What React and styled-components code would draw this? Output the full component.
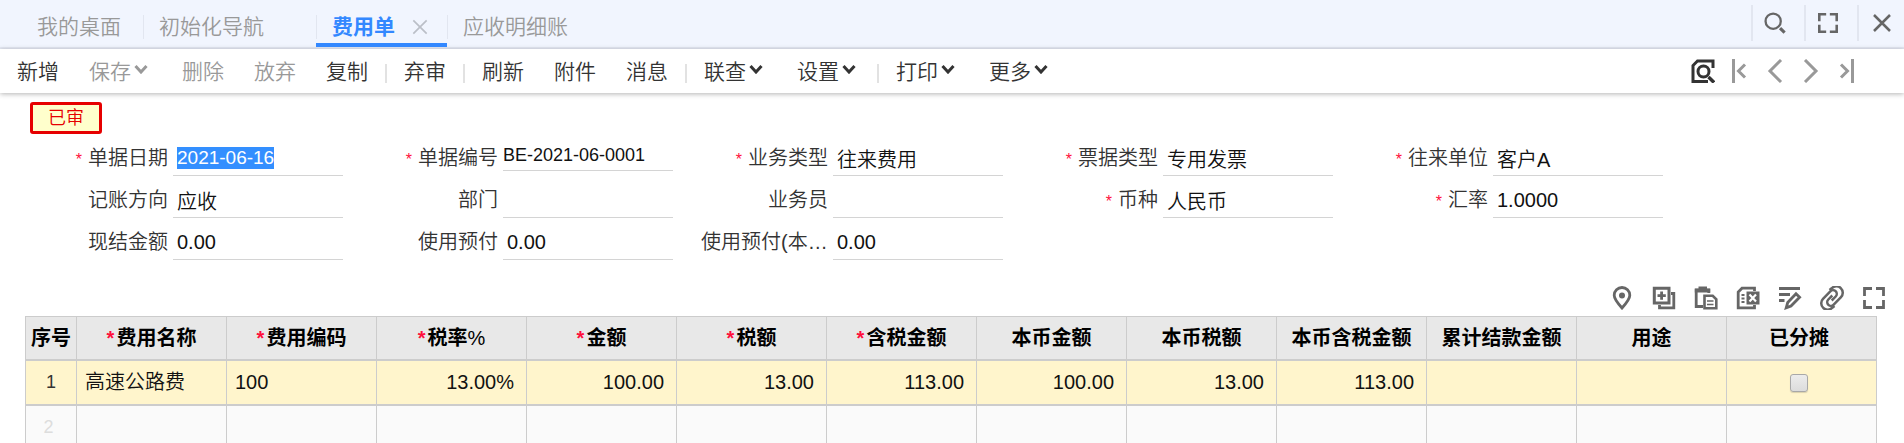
import React, { useEffect, useRef } from "react";
import styled, { createGlobalStyle } from "styled-components";

const GlobalStyle = createGlobalStyle`
  * {
    box-sizing: border-box;
  }
  body {
    margin: 0;
    background: #ffffff;
    font-family: "Liberation Sans", "Noto Sans CJK SC", sans-serif;
    font-weight: 350;
    color: #333333;
    overflow: hidden;
  }
  button, input {
    font-family: inherit;
    font-weight: inherit;
    border: 0;
    padding: 0;
    margin: 0;
    background: none;
  }
  button {
    cursor: pointer;
  }
`;

const Header = styled.header`
  display: flex;
  justify-content: space-between;
  background: #f1f5fe;
  border-bottom: 2px solid #e5e9f4;
`;

const Tabs = styled.nav`
  display: flex;
  padding-left: 22px;
`;

const Tab = styled.div`
  display: flex;
  align-items: center;
  height: 47px;
  padding-top: 11px;
  border-bottom: 4px solid ${(props) => (props.$active ? "#3388ff" : "transparent")};
`;

const Divider = styled.span`
  width: ${(props) => (props.$wide ? 2 : 1)}px;
  height: ${(props) => props.$height}px;
  background: #e2e6f0;
`;

const TabName = styled.button`
  padding: 0 15px;
  font-size: 21px;
  line-height: 24px;
  font-weight: ${(props) => (props.$active ? "bold" : "inherit")};
  color: ${(props) => (props.$active ? "#3388ff" : "#999999")};
`;

const CloseSlot = styled.span`
  display: flex;
  width: ${(props) => (props.$small ? 7 : 37)}px;
`;

const IconButton = styled.button`
  display: flex;
  align-items: center;
  justify-content: center;
  width: ${(props) => props.$width || 24}px;
  height: 24px;
  padding-right: ${(props) => (props.$inset ? 8 : 0)}px;
  color: ${(props) => props.$color || "#666666"};
`;

const WindowTools = styled.div`
  display: flex;
  align-items: center;
  height: 45px;
`;

const Toolbar = styled.div`
  display: flex;
  align-items: center;
  justify-content: space-between;
  height: 44px;
  padding: 0 45px 0 2px;
  background: #ffffff;
  box-shadow: 0 1px 5px rgba(0, 0, 0, 0.3);
`;

const ToolGroup = styled.div`
  display: flex;
  align-items: center;
  gap: ${(props) => props.$gap || 0}px;
`;

const ToolButton = styled.button`
  display: flex;
  align-items: center;
  padding: 2px 15px 0;
  font-size: 21px;
  line-height: 28px;
  color: ${(props) => (props.disabled ? "#999999" : "#333333")};
`;

const Arrow = styled.svg`
  width: 14px;
  height: 10px;
  margin: 0 4px 6px 3px;
`;

const ToolDivider = styled.span`
  width: 2px;
  height: 19px;
  margin: 4px 2px 0;
  background: #e2e2e2;
`;

const Stamp = styled.div`
  width: 72px;
  margin: 9px 0 0 30px;
  padding-top: 1px;
  border: 3px solid #e60000;
  border-radius: 3px;
  background: #ffffcc;
  color: #e60000;
  font-size: 18px;
  line-height: 25px;
  text-align: center;
`;

const Form = styled.form`
  display: grid;
  grid-template-columns: repeat(auto-fill, 302px);
  gap: 7px 28px;
  padding: 7px 0 0 41px;
`;

const Field = styled.div`
  display: flex;
  height: 35px;
`;

const Label = styled.label`
  width: 132px;
  padding-right: 5px;
  font-size: 20px;
  line-height: 34px;
  text-align: right;
  white-space: nowrap;
  overflow: hidden;
  text-overflow: ellipsis;
`;

const Star = styled.span`
  margin-right: ${(props) => (props.$head ? 2 : 6)}px;
  font-size: ${(props) => (props.$head ? 20 : 16)}px;
  color: #ff0f3c;
`;

const Value = styled.input`
  flex: 1;
  min-width: 0;
  height: ${(props) => (props.readOnly ? 30 : 35)}px;
  padding-left: ${(props) => (props.readOnly ? 0 : 4)}px;
  border-bottom: 1px solid #d4d4d4;
  font-size: ${(props) => props.$size || 20}px;
  line-height: 22px;
  color: #111111;
  outline: none;
  &::selection {
    background: #338fff;
    color: #ffffff;
  }
`;

const GridTools = styled.div`
  display: flex;
  justify-content: flex-end;
  gap: 18px;
  padding: 26px 18px 6px 0;
`;

const TableWrap = styled.div`
  padding: 0 27px 0 25px;
`;

const Table = styled.table`
  width: 100%;
  table-layout: fixed;
  border-collapse: separate;
  border-spacing: 0;
  border-top: 1px solid #cccccc;
  border-left: 1px solid #cccccc;
  font-size: 20px;
  line-height: 28px;
  color: #111111;
`;

const HeadCell = styled.th`
  width: ${(props) => (props.$narrow ? "51px" : "auto")};
  height: 44px;
  padding: 0 ${(props) => (props.$check ? 5 : 0)}px 0 0;
  border-right: 1px solid #cccccc;
  border-bottom: 2px solid #cccccc;
  background: #e8e8e8;
  color: #000000;
  white-space: nowrap;
`;

const Percent = styled.span`
  font-weight: normal;
`;

const Cell = styled.td`
  height: 45px;
  padding: 0 ${(props) => (props.$align === "right" ? 12 : 8)}px 2px;
  border-right: 1px solid #cccccc;
  border-bottom: 2px solid #cccccc;
  background: ${(props) => (props.$blank ? "#fafafa" : "#fff5cc")};
  text-align: ${(props) => props.$align || "left"};
`;

const RowNumber = styled(Cell)`
  font-size: 18px;
  color: ${(props) => (props.$blank ? "#dddddd" : "#333333")};
  padding: 0 ${(props) => (props.$blank ? 5 : 0)}px 2px 0;
`;

const CheckCell = styled(Cell)`
  padding: 0 5px 0 0;
`;

const Checkbox = styled.input`
  appearance: none;
  display: block;
  width: 18px;
  height: 18px;
  margin: 0 auto;
  border: 1px solid #a8a8a8;
  border-radius: 3px;
  background: linear-gradient(#ececec, #dcdcdc);
  box-shadow: 0 1px 1px rgba(0, 0, 0, 0.15);
`;

const Icon = ({ children, size = 24, stroke = 2.5 }) => (
  <svg
    width={size}
    height={size}
    viewBox="0 0 24 24"
    fill="none"
    stroke="currentColor"
    strokeWidth={stroke}
    aria-hidden="true"
  >
    {children}
  </svg>
);

const icons = {
  search: (
    <>
      <circle cx="10" cy="10" r="8.3" />
      <path d="M17.5 17.5l5 5" strokeWidth="3.4" />
    </>
  ),
  full: <path d="M10 2.5H2.5V10M14 2.5h7.5V10M21.5 14v7.5H14M10 21.5H2.5V14" strokeWidth="2.8" />,
  close: <path d="M4 4l16 16M20 4L4 20" />,
  preview: (
    <>
      <path d="M22 9V2H6.5L2 6.5V22.5H17" strokeWidth="3" />
      <circle cx="12.5" cy="12.5" r="5.5" strokeWidth="3" />
      <path d="M17.5 18l5.5 5.5" strokeWidth="3.4" />
    </>
  ),
  first: <path d="M6.5 0v24M18 5.5L11.5 12l6.5 6.5" strokeWidth="3" />,
  prev: <path d="M18 1L7 12l11 11" strokeWidth="3" />,
  next: <path d="M6 1l11 11L6 23" strokeWidth="3" />,
  last: <path d="M17.5 0v24M6 5.5l6.5 6.5L6 18.5" strokeWidth="3" />,
  pin: (
    <>
      <path d="M12 22C7 16.5 4.2 13 4.2 9.3a7.8 7.8 0 0 1 15.6 0C19.8 13 17 16.5 12 22z" strokeWidth="2.8" />
      <circle cx="12" cy="9.5" r="3" fill="currentColor" stroke="none" />
    </>
  ),
  addRow: (
    <>
      <path d="M2.3 2.3h14.7v14.7H2.3z" strokeWidth="3" />
      <path d="M5.5 9.6h8.3M9.6 5.5v8.3M19 7.5h2.8v14.3H7.5V19" strokeWidth="2.8" />
    </>
  ),
  paste: (
    <>
      <path d="M9 20.5H2.2V4.2h12.6V7" strokeWidth="2.8" />
      <path d="M4.5 0.5h8.5v4H4.5z" fill="currentColor" stroke="none" />
      <path d="M0.8 4.5h15.4" strokeWidth="4" />
      <path d="M10.5 9.8h8.2l3.6 3.6v8.8H10.5z" strokeWidth="2.6" />
      <path d="M13 15h6.5M13 18.5h6.5" strokeWidth="1.6" />
    </>
  ),
  excel: (
    <>
      <path d="M18.5 5V2.2H6L2.2 6v15.8h16.3V19" strokeWidth="2.8" />
      <path d="M10.5 5.5H23.5v13H10.5z" fill="currentColor" stroke="none" />
      <path d="M13.5 8.5l6.5 7M20 8.5l-6.5 7" stroke="#ffffff" strokeWidth="2.2" />
      <path d="M5.500 9h3M5.500 12.500h3M5.500 16h3" strokeWidth="2" />
    </>
  ),
  edit: (
    <>
      <path d="M1 2.5h21M1 8.5h11M1 14.5h5.5" strokeWidth="2.8" />
      <path d="M8.2 21.8l1.5-5.3L18 7.8l3.6 3.5-8.6 8.7z" strokeWidth="2.8" />
    </>
  ),
  link: (
    <>
      <path d="M9.5 4l2.2-1.7a6.2 6.2 0 0 1 9.3 8.8l-7.3 7.600a3.700 3.700 0 0 1-5.400-5.200l4-4" />
      <path d="M14.500 20l-2.200 1.700a6.200 6.200 0 0 1-9.300-8.800l7.300-7.600a3.700 3.700 0 0 1 5.400 5.200l-4 4" />
    </>
  ),
};

const NamedIcon = ({ name, label, width, size, stroke, color, inset }) => (
  <IconButton type="button" aria-label={label} $width={width} $color={color} $inset={inset}>
    <Icon size={size} stroke={stroke}>
      {icons[name]}
    </Icon>
  </IconButton>
);

const tools = [
  { name: "新增" },
  { name: "保存", disabled: true, menu: true },
  { name: "删除", disabled: true },
  { name: "放弃", disabled: true },
  { name: "复制" },
  { divider: true },
  { name: "弃审" },
  { divider: true },
  { name: "刷新" },
  { name: "附件" },
  { name: "消息" },
  { divider: true },
  { name: "联查", menu: true },
  { name: "设置", menu: true },
  { divider: true },
  { name: "打印", menu: true },
  { name: "更多", menu: true },
];

const fields = [
  { id: "date", label: "单据日期", value: "2021-06-16", required: true, size: 19 },
  { id: "code", label: "单据编号", value: "BE-2021-06-0001", required: true, readOnly: true, size: 18 },
  { id: "business", label: "业务类型", value: "往来费用", required: true },
  { id: "invoice", label: "票据类型", value: "专用发票", required: true },
  { id: "partner", label: "往来单位", value: "客户A", required: true },
  { id: "direction", label: "记账方向", value: "应收" },
  { id: "department", label: "部门", value: "" },
  { id: "clerk", label: "业务员", value: "" },
  { id: "currency", label: "币种", value: "人民币", required: true },
  { id: "rate", label: "汇率", value: "1.0000", required: true },
  { id: "cash", label: "现结金额", value: "0.00" },
  { id: "prepaid", label: "使用预付", value: "0.00" },
  { id: "prepaidLocal", label: "使用预付(本币)", value: "0.00" },
];

const columns = [
  { title: "费用名称", required: true, value: "高速公路费" },
  { title: "费用编码", required: true, value: "100" },
  { title: "税率", percent: true, required: true, value: "13.00%", align: "right" },
  { title: "金额", required: true, value: "100.00", align: "right" },
  { title: "税额", required: true, value: "13.00", align: "right" },
  { title: "含税金额", required: true, value: "113.00", align: "right" },
  { title: "本币金额", value: "100.00", align: "right" },
  { title: "本币税额", value: "13.00", align: "right" },
  { title: "本币含税金额", value: "113.00", align: "right" },
  { title: "累计结款金额", value: "" },
  { title: "用途", value: "" },
  { title: "已分摊", checkbox: true },
];

const App = () => {
  const dateRef = useRef(null);

  useEffect(() => {
    dateRef.current.focus();
    dateRef.current.select();
  }, []);

  return (
    <>
      <GlobalStyle />
      <Header>
        <Tabs>
          <Tab>
            <TabName>我的桌面</TabName>
            <CloseSlot $small />
          </Tab>
          <Tab>
            <Divider $height={24} />
            <TabName>初始化导航</TabName>
            <CloseSlot />
          </Tab>
          <Tab $active>
            <Divider $height={24} />
            <TabName $active>费用单</TabName>
            <CloseSlot>
              <NamedIcon name="close" label="关闭费用单" width={20} size={22} stroke={2} color="#bbbfc7" />
            </CloseSlot>
          </Tab>
          <Tab>
            <Divider $height={24} />
            <TabName>应收明细账</TabName>
          </Tab>
        </Tabs>
        <WindowTools>
          <Divider $height={36} $wide />
          <NamedIcon name="search" label="搜索" width={51} size={22} inset />
          <Divider $height={36} $wide />
          <NamedIcon name="full" label="全屏" width={51} size={22} inset />
          <Divider $height={36} $wide />
          <NamedIcon name="close" label="关闭" width={45} />
        </WindowTools>
      </Header>
      <Toolbar>
        <ToolGroup>
          {tools.map((tool, i) =>
            tool.divider ? (
              <ToolDivider key={i} />
            ) : (
              <ToolButton key={i} type="button" disabled={tool.disabled}>
                {tool.name}
                {tool.menu && (
                  <Arrow viewBox="0 0 14 10" fill="none" stroke="currentColor" strokeWidth="3">
                    <path d="M1.5 2L7 8l5.5-6" />
                  </Arrow>
                )}
              </ToolButton>
            )
          )}
        </ToolGroup>
        <ToolGroup $gap={12}>
          <NamedIcon name="preview" label="预览" color="#333333" />
          <NamedIcon name="first" label="首张" color="#999999" />
          <NamedIcon name="prev" label="上张" color="#999999" />
          <NamedIcon name="next" label="下张" color="#999999" />
          <NamedIcon name="last" label="末张" color="#999999" />
        </ToolGroup>
      </Toolbar>
      <Stamp>已审</Stamp>
      <Form>
        {fields.map((field) => (
          <Field key={field.id}>
            <Label htmlFor={field.id}>
              {field.required && <Star>*</Star>}
              {field.label}
            </Label>
            <Value
              id={field.id}
              ref={field.id === "date" ? dateRef : null}
              defaultValue={field.value}
              readOnly={field.readOnly}
              $size={field.size}
            />
          </Field>
        ))}
      </Form>
      <GridTools>
        <NamedIcon name="pin" label="定位" />
        <NamedIcon name="addRow" label="插行" />
        <NamedIcon name="paste" label="粘贴" />
        <NamedIcon name="excel" label="导出" />
        <NamedIcon name="edit" label="批改" />
        <NamedIcon name="link" label="附件" />
        <NamedIcon name="full" label="全屏" />
      </GridTools>
      <TableWrap>
        <Table>
          <thead>
            <tr>
              <HeadCell $narrow>序号</HeadCell>
              {columns.map((col) => (
                <HeadCell key={col.title} $check={col.checkbox}>
                  {col.required && <Star $head>*</Star>}
                  {col.title}
                  {col.percent && <Percent>%</Percent>}
                </HeadCell>
              ))}
            </tr>
          </thead>
          <tbody>
            <tr>
              <RowNumber $align="center">1</RowNumber>
              {columns.map((col) =>
                col.checkbox ? (
                  <CheckCell key={col.title}>
                    <Checkbox type="checkbox" aria-label={col.title} />
                  </CheckCell>
                ) : (
                  <Cell key={col.title} $align={col.align}>
                    {col.value}
                  </Cell>
                )
              )}
            </tr>
            <tr>
              <RowNumber $align="center" $blank>
                2
              </RowNumber>
              {columns.map((col) => (
                <Cell key={col.title} $blank />
              ))}
            </tr>
          </tbody>
        </Table>
      </TableWrap>
    </>
  );
};

export default App;
